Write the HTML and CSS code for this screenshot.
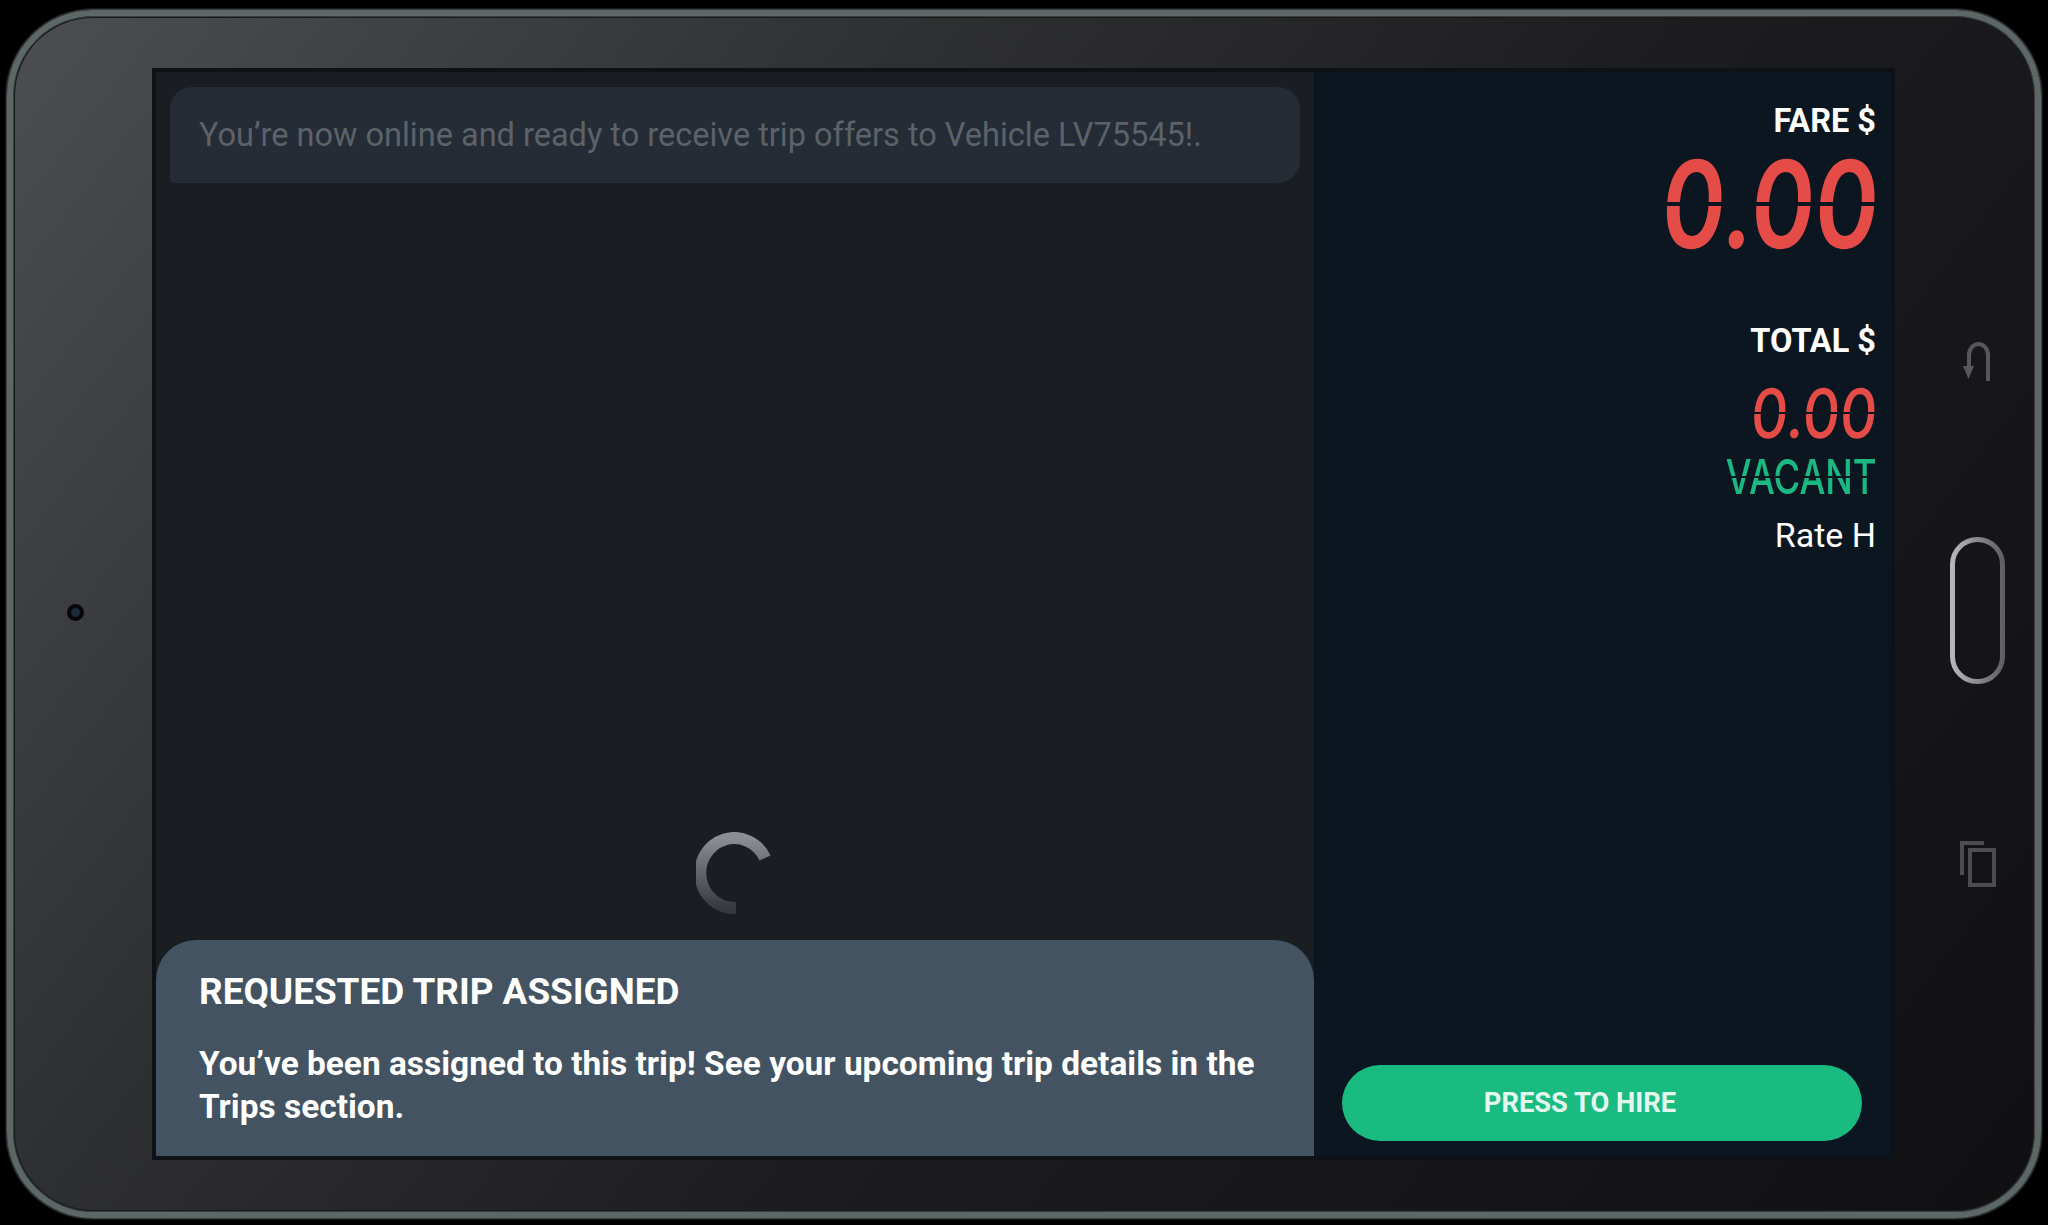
FILE: index.html
```html
<!DOCTYPE html>
<html lang="en">
<head>
    <meta charset="UTF-8">
    <meta name="viewport" content="width=device-width, initial-scale=1.0">
    <title>Taximeter</title>
    <link rel="stylesheet" href="styles.css">
</head>
<body>
    <div class="tablet">
        <!-- Camera side -->
        <div class="bezel-left">
            <div class="camera"></div>
        </div>

        <div class="screen">
            <div class="main-panel">
                <div class="banner">You’re now online and ready to receive trip offers to Vehicle LV75545!.</div>

                <div class="spinner-wrap">
                    <svg class="spinner" width="80" height="84" viewBox="0 0 80 84">
                        <defs>
                            <linearGradient id="spin" x1="0" y1="0" x2="0" y2="1">
                                <stop offset="0" stop-color="#8b8e92"/>
                                <stop offset="1" stop-color="#37393e"/>
                            </linearGradient>
                        </defs>
                        <path d="M69 26 A34 35 0 1 0 40 76" fill="none" stroke="url(#spin)" stroke-width="12"/>
                    </svg>
                </div>

                <div class="sheet">
                    <h2>REQUESTED TRIP ASSIGNED</h2>
                    <p>You’ve been assigned to this trip! See your upcoming trip details in the Trips section.</p>
                </div>
            </div>

            <div class="meter-panel">
                <div class="label">FARE $</div>
                <div class="digits digits-fare"><span>0.00</span></div>
                <div class="label label-total">TOTAL $</div>
                <div class="digits digits-total"><span>0.00</span></div>
                <div class="digits digits-status"><span>VACANT</span></div>
                <div class="rate">Rate H</div>
                <button class="hire-btn">PRESS TO HIRE</button>
            </div>
        </div>

        <!-- Hardware buttons -->
        <div class="bezel-right">
            <svg width="28" height="39" viewBox="0 0 28 39">
                <path d="M25 39 V13 A9.5 11 0 0 0 6 13 V26" fill="none" stroke="#55585b" stroke-width="4"/>
                <path d="M0 24 H11 L5.5 37 Z" fill="#55585b"/>
            </svg>
            <svg width="55" height="147" viewBox="0 0 55 147">
                <defs>
                    <linearGradient id="home" x1="0" y1="0" x2="1" y2="0">
                        <stop offset="0" stop-color="#b5b6b7"/>
                        <stop offset="1" stop-color="#5f6062"/>
                    </linearGradient>
                </defs>
                <rect x="2.5" y="2.5" width="50" height="142" rx="25" fill="none" stroke="url(#home)" stroke-width="5"/>
            </svg>
            <svg width="37" height="47" viewBox="0 0 37 47">
                <path d="M3 35 V3 H25" fill="none" stroke="#4b4d50" stroke-width="4"/>
                <rect x="11" y="10" width="24" height="35" fill="none" stroke="#4b4d50" stroke-width="4"/>
            </svg>
        </div>
    </div>
</body>
</html>
```

FILE: styles.css
```css
* {
    box-sizing: border-box;
}
body {
    margin: 0;
    background: #000;
    font-family: Roboto, "Liberation Sans", sans-serif;
    height: 1225px;
    overflow: hidden;
}
.tablet {
    width: 2034px;
    height: 1208px;
    margin: 10px 0 0 7px;
    display: flex;
    border: 6px solid #5e6767;
    border-radius: 86px;
    background: linear-gradient(128deg, #4d4e52 0%, #2e2f31 32%, #1c1c1e 58%, #101012 100%);
    box-shadow: 0 0 0 1px #383e3e, 0 0 0 2px #181a1a, inset 0 0 0 1px #383e3e, inset 0 0 0 2px #181a1a;
}
.bezel-left {
    width: 139px;
    display: flex;
    justify-content: center;
    align-items: flex-start;
    padding: 588px 14px 0 0;
}
.camera {
    width: 17px;
    height: 17px;
    border-radius: 50%;
    background: #1c2a3c;
    border: 4px solid #07070b;
}
.screen {
    width: 1743px;
    height: 1092px;
    margin-top: 52px;
    display: flex;
    border: 4px solid #0e1115;
}
.main-panel {
    width: 1159px;
    display: flex;
    flex-direction: column;
    background: #1a1d22;
}
.banner {
    margin: 15px 14px 0;
    height: 96px;
    padding: 0 0 0 29px;
    line-height: 97px;
    font-size: 32.5px;
    color: #5c6269;
    background: #252c35;
    border-radius: 22px 22px 22px 4px;
    white-space: nowrap;
}
.spinner-wrap {
    flex: 1;
    display: flex;
    justify-content: center;
    align-items: flex-end;
    padding: 0 0 24px 1px;
}
.sheet {
    height: 216px;
    padding: 30px 40px 0 43px;
    background: #435361;
    border-radius: 40px 40px 0 0;
    color: #fff;
}
.sheet h2 {
    margin: 0;
    font-size: 36.9px;
    line-height: 44px;
    font-weight: 700;
}
.sheet p {
    margin: 28px 0 0;
    font-size: 33.45px;
    line-height: 43px;
    font-weight: 700;
}
.meter-panel {
    flex: 1;
    display: flex;
    flex-direction: column;
    align-items: flex-end;
    padding: 29px 15px 15px 28px;
    background: #0b1620;
    color: #fff;
}
.label {
    font-size: 32.5px;
    line-height: 40px;
    font-weight: 700;
}
.label-total {
    margin-top: 59px;
}
.rate {
    margin-top: 18px;
    font-size: 34px;
    line-height: 40px;
}

/* no seven segment font here, so Inter is stretched and sheared to get near it */
.digits {
    font-family: Inter, "DejaVu Sans", sans-serif;
    white-space: nowrap;
    margin-right: -3px;
    -webkit-mask-image: linear-gradient(#000 48%, transparent 48%, transparent 52%, #000 52%);
    mask-image: linear-gradient(#000 48%, transparent 48%, transparent 52%, #000 52%);
}
.digits span {
    display: inline-block;
    transform-origin: right center;
}
.digits-fare {
    margin-top: 5px;
    height: 116px;
    font-size: 121px;
    line-height: 116px;
    font-weight: 600;
    color: #e64c47;
}
.digits-fare span {
    transform: skewX(-4deg) scaleX(0.8);
}
.digits-total {
    margin-top: 22px;
    margin-right: -2px;
    height: 60px;
    font-size: 68px;
    line-height: 60px;
    font-weight: 500;
    color: #e64c47;
}
.digits-total span {
    transform: skewX(-4deg) scaleX(0.85);
}
.digits-status {
    margin-top: 14px;
    margin-right: -1px;
    height: 40px;
    font-size: 48px;
    line-height: 40px;
    font-weight: 500;
    color: #1bb981;
}
.digits-status span {
    transform: scaleX(0.76);
}
.hire-btn {
    margin-top: auto;
    margin-right: 14px;
    width: 520px;
    height: 76px;
    padding: 0 44px 0 0;
    border: 0;
    border-radius: 38px;
    background: #19bb81;
    color: #e4f7ef;
    font-family: Roboto, "Liberation Sans", sans-serif;
    font-size: 27.3px;
    font-weight: 700;
}
.bezel-right {
    flex: 1;
    display: flex;
    flex-direction: column;
    align-items: center;
    padding: 326px 0 0 24px;
    gap: 156px;
}
```
